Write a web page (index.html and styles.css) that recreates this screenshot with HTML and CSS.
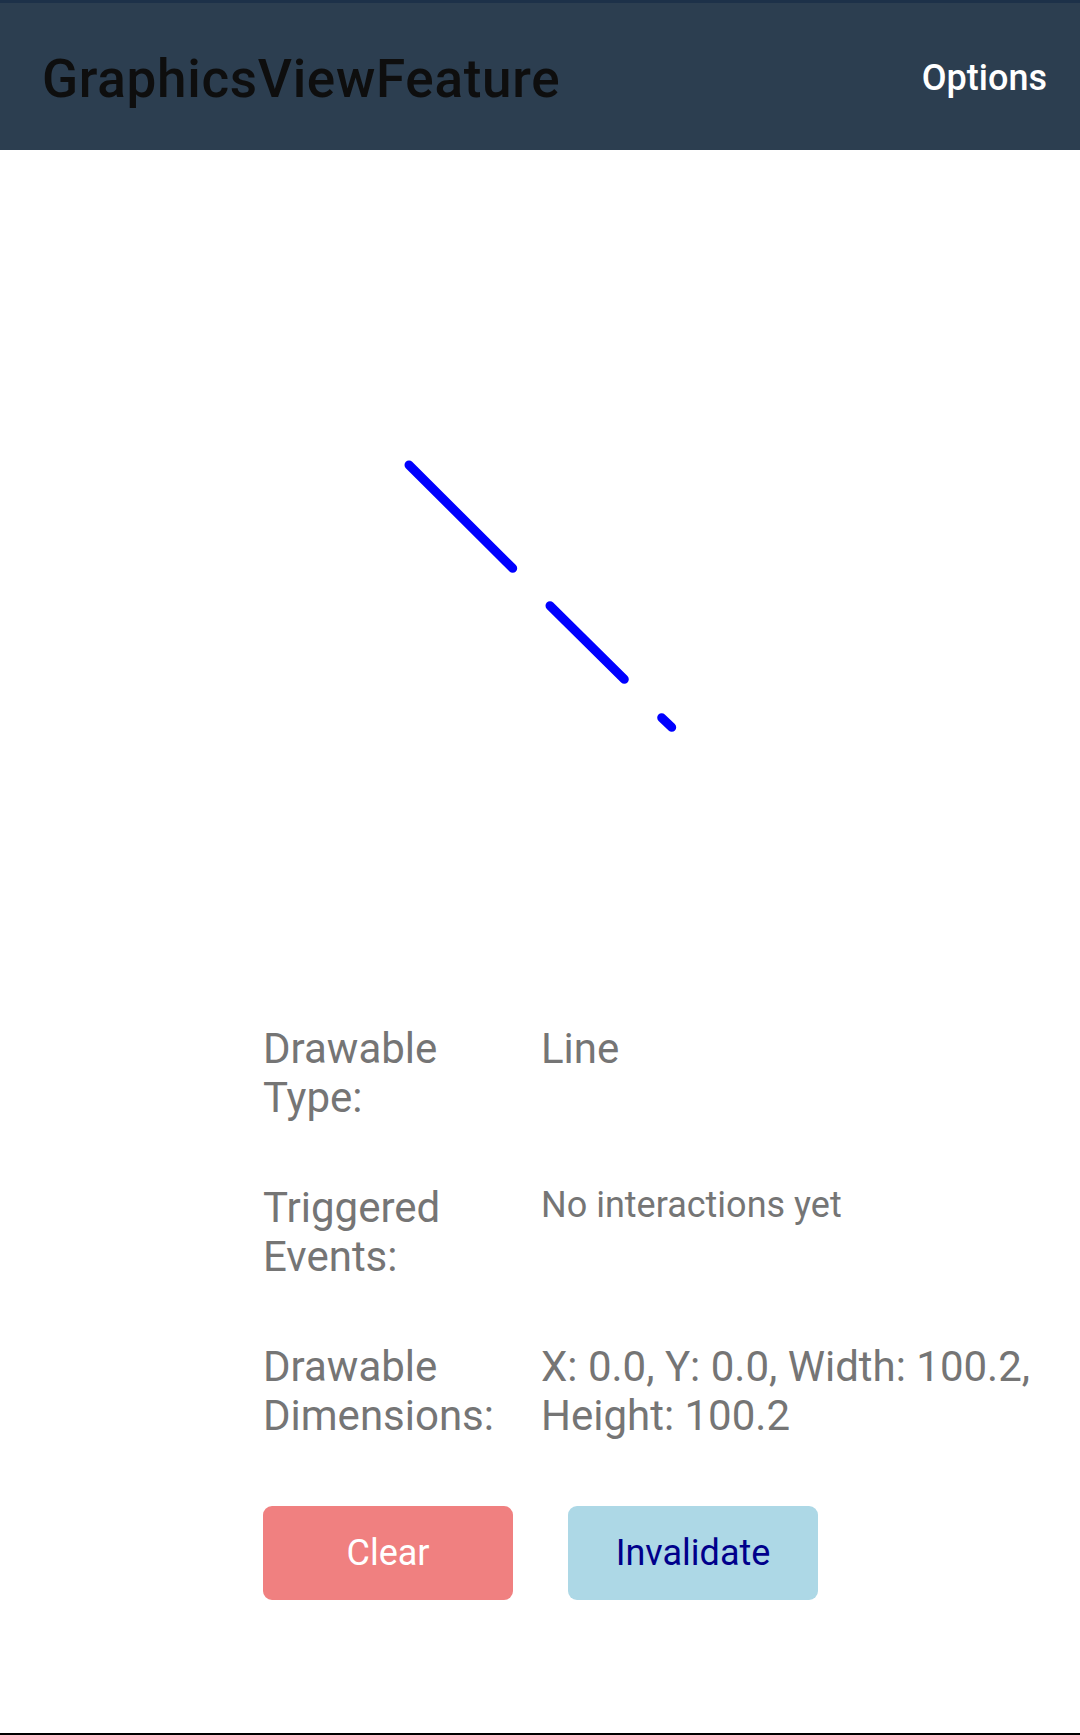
FILE: index.html
```html
<!DOCTYPE html>
<html>
<head>
<meta charset="utf-8">
<link rel="stylesheet" href="styles.css">
</head>
<body>
<div class="app">
  <header class="toolbar">
    <div class="title">GraphicsViewFeature</div>
    <div class="menu">Options</div>
  </header>
  <main class="content">
    <svg class="canvas" width="1080" height="873" viewBox="0 150 1080 873">
      <g stroke="#0000ff" stroke-width="9" stroke-linecap="round">
        <line x1="409" y1="465" x2="512.7" y2="568.3"/>
        <line x1="550" y1="605.7" x2="624.3" y2="679.3"/>
        <line x1="661.7" y1="717.7" x2="671.7" y2="727.3"/>
      </g>
    </svg>
    <section class="info">
      <div class="row">
        <div class="label">Drawable<br>Type:</div>
        <div class="value">Line</div>
      </div>
      <div class="row">
        <div class="label">Triggered<br>Events:</div>
        <div class="value small">No interactions yet</div>
      </div>
      <div class="row">
        <div class="label">Drawable<br>Dimensions:</div>
        <div class="value">X: 0.0, Y: 0.0, Width: 100.2, Height: 100.2</div>
      </div>
    </section>
    <div class="buttons">
      <button class="btn btn-clear">Clear</button>
      <button class="btn btn-invalidate">Invalidate</button>
    </div>
  </main>
  <div class="bottom-line"></div>
</div>
</body>
</html>
```
FILE: styles.css
```css
html, body {
  margin: 0;
  padding: 0;
  background: #ffffff;
}
body {
  font-family: Roboto, "Noto Sans", sans-serif;
}
.app {
  width: 1080px;
  height: 1735px;
  display: flex;
  flex-direction: column;
  overflow: hidden;
}
.toolbar {
  height: 147px;
  border-top: 3px solid #1d3149;
  background: #2c3e50;
  display: flex;
  align-items: center;
  justify-content: space-between;
  padding: 0 33px 0 42px;
  flex-shrink: 0;
}
.title {
  font-size: 53px;
  font-weight: 500;
  color: #0e0e0e;
  letter-spacing: 0.7px;
  padding-top: 4px;
}
.menu {
  font-size: 36px;
  font-weight: 500;
  color: #ffffff;
  padding-top: 2px;
}
.content {
  flex: 1;
  display: flex;
  flex-direction: column;
}
.canvas {
  display: block;
  flex-shrink: 0;
}
.info {
  display: flex;
  flex-direction: column;
  gap: 61px;
  padding-left: 263px;
  padding-top: 1px;
}
.row {
  display: flex;
}
.label {
  width: 278px;
  flex-shrink: 0;
  font-size: 42px;
  line-height: 49px;
  color: #757575;
}
.value {
  width: 500px;
  font-size: 42px;
  line-height: 49px;
  color: #757575;
}
.value.small {
  font-size: 36px;
  line-height: 42px;
  padding-top: 1px;
}
.buttons {
  display: flex;
  gap: 55px;
  padding-left: 263px;
  margin-top: 66px;
}
.btn {
  width: 250px;
  height: 94px;
  border: none;
  border-radius: 9px;
  font-family: Roboto, "Noto Sans", sans-serif;
  font-size: 36px;
  padding: 0;
}
.btn-clear {
  background: #f08080;
  color: #ffffff;
}
.btn-invalidate {
  background: #add8e6;
  color: #00008b;
}
.bottom-line {
  height: 2px;
  background: #000000;
  flex-shrink: 0;
}
```
